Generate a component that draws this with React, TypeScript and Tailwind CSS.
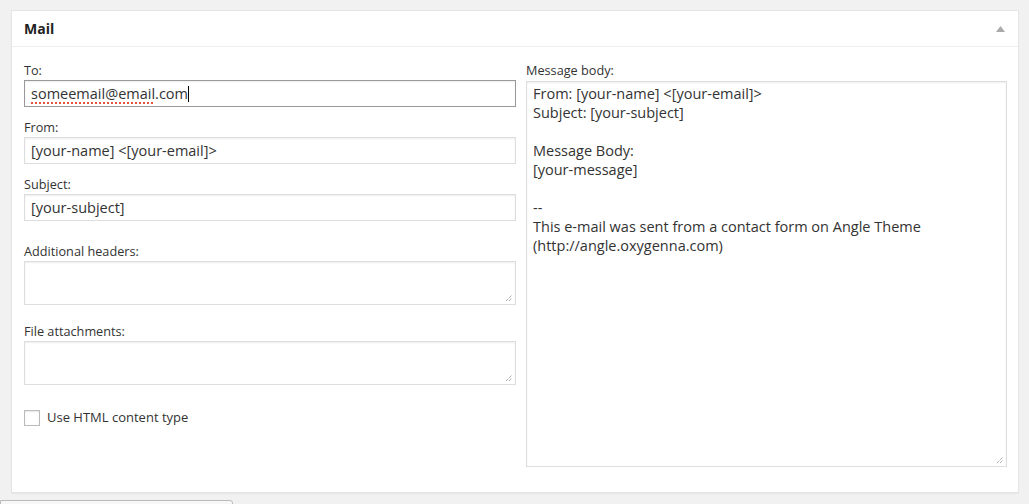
const font = { fontFamily: '"Open Sans", "Noto Sans", Arial, sans-serif' };

function TextField({ label, value, focused, className }: { label: string; value: string; focused?: boolean; className?: string }) {
  return (
    <div className={className}>
      <label className="block h-[19px] text-[12.7px] leading-[19px] text-[#333]">{label}</label>
      <div
        className={`h-[27px] border bg-white px-[6px] text-[14.5px] leading-[25px] text-[#333] shadow-[inset_0_1px_2px_rgba(0,0,0,0.07)] ${
          focused ? 'border-[#999]' : 'border-[#ddd]'
        }`}
      >
        {focused ? (
          <span>
            <span className="underline decoration-dotted decoration-[#e5533a] decoration-2 underline-offset-[3px]">someemail@email</span>
            .com
            <span className="inline-block h-[16px] w-px translate-y-[3px] bg-black" />
          </span>
        ) : (
          value
        )}
      </div>
    </div>
  );
}

function ResizeGrip() {
  return (
    <svg className="absolute bottom-[2px] right-[2px]" width="8" height="8" viewBox="0 0 8 8">
      <path d="M1 7L7 1M4 7L7 4" stroke="#888" strokeWidth="1" strokeDasharray="1 1" />
    </svg>
  );
}

function AreaField({ label, className }: { label: string; className?: string }) {
  return (
    <div className={className}>
      <label className="block h-[19px] text-[12.7px] leading-[19px] text-[#333]">{label}</label>
      <div className="relative h-[44px] border border-[#ddd] bg-white shadow-[inset_0_1px_2px_rgba(0,0,0,0.07)]">
        <ResizeGrip />
      </div>
    </div>
  );
}

const bodyLines = [
  'From: [your-name] <[your-email]>',
  'Subject: [your-subject]',
  '',
  'Message Body:',
  '[your-message]',
  '',
  '--',
  'This e-mail was sent from a contact form on Angle Theme',
  '(http://angle.oxygenna.com)',
];

export default function App() {
  return (
    <div className="h-[504px] w-[1029px] overflow-hidden bg-[#f1f1f1] pt-[10px] pl-[11px]" style={font}>
      <div className="h-[483px] w-[1008px] border border-[#e5e5e5] bg-white shadow-[0_1px_1px_rgba(0,0,0,0.04)]">
        {/* Header */}
        <div className="flex h-[36px] items-center justify-between border-b border-[#eee] pl-[12px] pr-[13px]">
          <h3 className="text-[14px] font-bold text-[#222]">Mail</h3>
          <svg width="9" height="6" viewBox="0 0 9 6">
            <path d="M4.5 0L9 6H0Z" fill="#aaa" />
          </svg>
        </div>

        <div className="flex gap-[10px] pl-[12px] pt-[14px]">
          {/* Left column */}
          <div className="w-[492px]">
            <TextField label="To:" value="someemail@email.com" focused className="mb-[11px]" />
            <TextField label="From:" value="[your-name] <[your-email]>" className="mb-[11px]" />
            <TextField label="Subject:" value="[your-subject]" className="mb-[21px]" />
            <AreaField label="Additional headers:" className="mb-[17px]" />
            <AreaField label="File attachments:" className="mb-[23px]" />
            <div className="flex items-center gap-[7px]">
              <span className="h-[16px] w-[16px] border border-[#bbb] bg-white shadow-[inset_0_1px_2px_rgba(0,0,0,0.1)]" />
              <span className="text-[13px] text-[#333]">Use HTML content type</span>
            </div>
          </div>

          {/* Right column */}
          <div className="w-[481px]">
            <label className="block h-[20px] text-[12.7px] leading-[19px] text-[#333]">Message body:</label>
            <div className="relative h-[386px] border border-[#ddd] bg-white px-[6px] pt-[2px] text-[14.5px] leading-[19px] text-[#333] shadow-[inset_0_1px_2px_rgba(0,0,0,0.07)]">
              {bodyLines.map((line, i) => (
                <div key={i} className="h-[19px]">
                  {line}
                </div>
              ))}
              <ResizeGrip />
            </div>
          </div>
        </div>
      </div>
      <div className="-ml-[11px] mt-[7px] h-[10px] w-[233px] rounded-tr-[3px] border border-[#bbb] bg-[#f7f7f7]" />
    </div>
  );
}
